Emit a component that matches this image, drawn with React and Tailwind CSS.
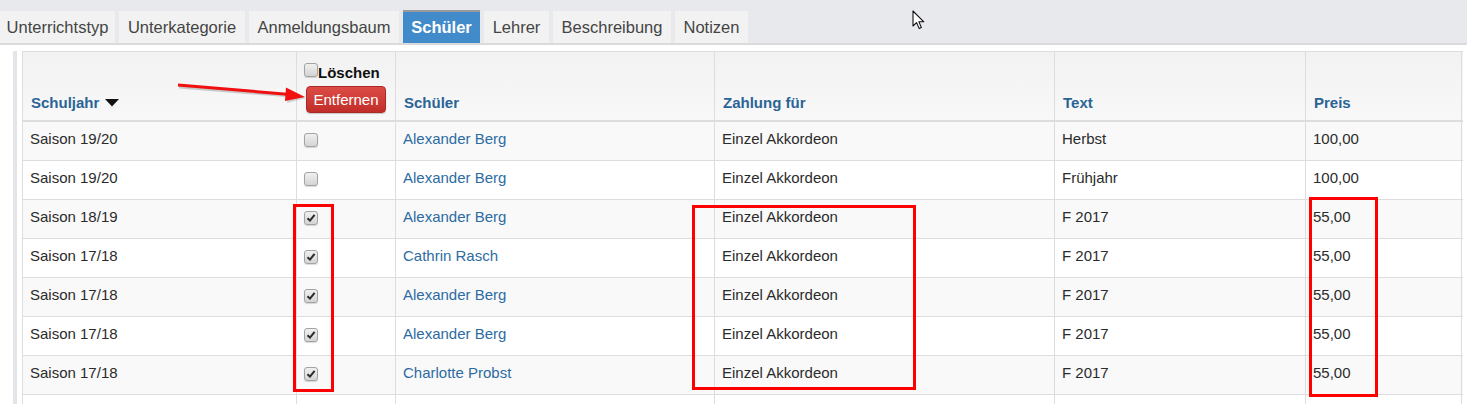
import React from 'react'

const tabs = [
  { label: 'Unterrichtstyp', w: 'w-[115px]' },
  { label: 'Unterkategorie', w: 'w-[126px]' },
  { label: 'Anmeldungsbaum', w: 'w-[150px]' },
  { label: 'Schüler', w: 'w-[77px]', active: true },
  { label: 'Lehrer', w: 'w-[65px]' },
  { label: 'Beschreibung', w: 'w-[118px]' },
  { label: 'Notizen', w: 'w-[73px]' }
]

const rows = [
  { jahr: 'Saison 19/20', checked: false, name: 'Alexander Berg', text: 'Herbst', preis: '100,00' },
  { jahr: 'Saison 19/20', checked: false, name: 'Alexander Berg', text: 'Frühjahr', preis: '100,00' },
  { jahr: 'Saison 18/19', checked: true, name: 'Alexander Berg', text: 'F 2017', preis: '55,00' },
  { jahr: 'Saison 17/18', checked: true, name: 'Cathrin Rasch', text: 'F 2017', preis: '55,00' },
  { jahr: 'Saison 17/18', checked: true, name: 'Alexander Berg', text: 'F 2017', preis: '55,00' },
  { jahr: 'Saison 17/18', checked: true, name: 'Alexander Berg', text: 'F 2017', preis: '55,00' },
  { jahr: 'Saison 17/18', checked: true, name: 'Charlotte Probst', text: 'F 2017', preis: '55,00' }
]

const cols = 'grid grid-cols-[274px_99px_319px_340px_251px_157px]'

function Checkbox({ checked }) {
  return (
    <div className="w-[14px] h-[14px] rounded-[3px] border border-[#a3a3a3] bg-gradient-to-b from-[#f0f0f0] to-[#d4d4d4] shadow-[0_1px_1px_rgba(0,0,0,0.15)] flex items-center justify-center">
      {checked && (
        <svg width="10" height="10" viewBox="0 0 10 10">
          <path d="M1.5 5.2 L4 7.6 L8.6 1.8" fill="none" stroke="#2b2b2b" strokeWidth="2" />
        </svg>
      )}
    </div>
  )
}

export default function App() {
  return (
    <div className="relative w-[1467px] h-[404px] overflow-hidden bg-white font-['Liberation_Sans',Arial,sans-serif] text-[#2b2b2b]">

      {/* tabs */}
      <div className="h-[45px] bg-[#e8e9ed] border-b-2 border-[#dadada] flex items-end gap-[4px]">
        {tabs.map(t => (
          t.active ? (
            <div
              key={t.label}
              className={`${t.w} h-[33px] border-t-2 border-[#9a9a9a] bg-[#428bca] text-white font-bold text-[16.5px] flex items-center justify-center`}
            >
              {t.label}
            </div>
          ) : (
            <div
              key={t.label}
              className={`${t.w} h-[32px] bg-[#f2f2f2] text-[#444] text-[16.5px] flex items-center justify-center`}
            >
              {t.label}
            </div>
          )
        ))}
      </div>

      {/* content */}
      <div className="flex pt-[6px]">

        <div className="w-[22px] shrink-0 flex">
          <div className="ml-[13px] w-[4px] h-[360px] bg-[#e4e4e9]" />
        </div>

        <div className="w-[1441px]">

          {/* header */}
          <div className={`${cols} h-[71px] border-t border-b-2 border-[#dddddd] bg-gradient-to-b from-[#f2f2f2] to-[#f8f8f8]`}>
            <div className="border-l border-[#dddddd] flex items-end pl-[8px] pb-[7px]">
              <span className="text-[15px] font-bold text-[#2a6496] leading-[20px]">Schuljahr</span>
              <svg className="ml-[6px] mb-[6px]" width="14" height="8" viewBox="0 0 14 8">
                <path d="M0 0 L14 0 L7 7.5 Z" fill="#111" />
              </svg>
            </div>
            <div className="border-l border-[#dddddd] pl-[7px] pt-[10px] flex flex-col items-start">
              <div className="flex items-start h-[20px]">
                <div className="mt-[1px]">
                  <Checkbox checked={false} />
                </div>
                <span className="text-[15px] font-bold text-[#111] leading-[22px]">Löschen</span>
              </div>
              <button className="mt-[4px] ml-[2px] h-[27px] w-[80px] rounded-[4px] border border-[#ac2925] bg-gradient-to-b from-[#dd4b46] to-[#c12e2a] text-white text-[15px] leading-none shadow-[0_1px_1px_rgba(0,0,0,0.2)]">
                Entfernen
              </button>
            </div>
            <div className="border-l border-[#dddddd] flex items-end pl-[8px] pb-[7px]">
              <span className="text-[15px] font-bold text-[#2a6496] leading-[20px]">Schüler</span>
            </div>
            <div className="border-l border-[#dddddd] flex items-end pl-[8px] pb-[7px]">
              <span className="text-[15px] font-bold text-[#2a6496] leading-[20px]">Zahlung für</span>
            </div>
            <div className="border-l border-[#dddddd] flex items-end pl-[8px] pb-[7px]">
              <span className="text-[15px] font-bold text-[#2a6496] leading-[20px]">Text</span>
            </div>
            <div className="border-l border-r border-[#dddddd] flex items-end pl-[8px] pb-[7px]">
              <span className="text-[15px] font-bold text-[#2a6496] leading-[20px]">Preis</span>
            </div>
          </div>

          {/* rows */}
          {rows.map((r, i) => (
            <div
              key={i}
              className={`${cols} h-[39px] border-b border-[#dddddd] text-[15px] leading-[21px] ${i % 2 === 0 ? 'bg-[#f9f9f9]' : 'bg-white'}`}
            >
              <div className="border-l border-[#dddddd] pl-[7px] pt-[6px]">{r.jahr}</div>
              <div className="border-l border-[#dddddd] pl-[7px] pt-[11px]">
                <Checkbox checked={r.checked} />
              </div>
              <div className="border-l border-[#dddddd] pl-[7px] pt-[6px] text-[#2d6ca2]">{r.name}</div>
              <div className="border-l border-[#dddddd] pl-[7px] pt-[6px]">Einzel Akkordeon</div>
              <div className="border-l border-[#dddddd] pl-[7px] pt-[6px]">{r.text}</div>
              <div className="border-l border-r border-[#dddddd] pl-[7px] pt-[6px]">{r.preis}</div>
            </div>
          ))}

          <div className={`${cols} h-[39px] border-b border-[#dddddd] bg-white`}>
            <div className="border-l border-[#dddddd]" />
            <div className="border-l border-[#dddddd]" />
            <div className="border-l border-[#dddddd]" />
            <div className="border-l border-[#dddddd]" />
            <div className="border-l border-[#dddddd]" />
            <div className="border-l border-r border-[#dddddd]" />
          </div>
        </div>
      </div>

      {/* annotations */}
      <div className="absolute left-[293px] top-[204px] w-[41px] h-[188px] border-[3px] border-[#ff0000]" />
      <div className="absolute left-[692px] top-[205px] w-[224px] h-[185px] border-[3px] border-[#ff0000]" />
      <div className="absolute left-[1309px] top-[197px] w-[69px] h-[200px] border-[3px] border-[#ff0000]" />

      <svg className="absolute left-[170px] top-[76px]" width="145" height="32" viewBox="0 0 145 32">
        <line x1="9" y1="11" x2="122" y2="20" stroke="rgba(0,0,0,0.18)" strokeWidth="3" />
        <path d="M118 14 L136 22 L117 27 Z" fill="rgba(0,0,0,0.15)" />
        <line x1="8" y1="9" x2="120" y2="18.5" stroke="#f01010" strokeWidth="3" />
        <path d="M116 11.5 L135 21 L115 25 Z" fill="#f01010" />
      </svg>

      {/* mouse cursor */}
      <svg className="absolute left-[912px] top-[10px]" width="14" height="21" viewBox="0 0 14 21">
        <path d="M1 1 L1 16 L4.6 12.6 L7.2 18.6 L9.4 17.6 L6.9 11.8 L11.8 11.8 Z" fill="#fff" stroke="#111" strokeWidth="1.1" strokeLinejoin="round" />
      </svg>

    </div>
  )
}
